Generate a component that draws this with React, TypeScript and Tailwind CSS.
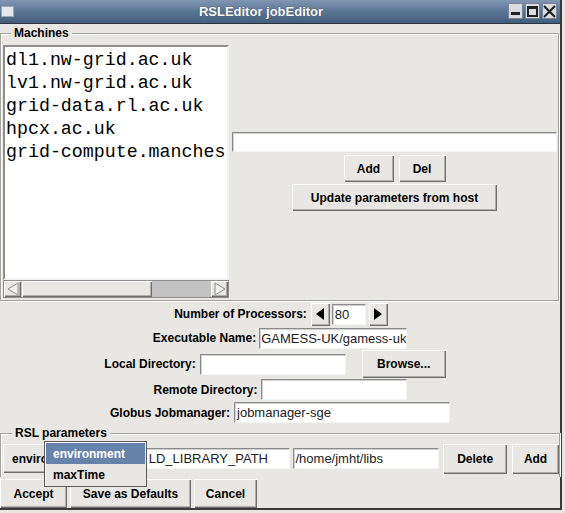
import React from "react";

const SANS = { fontFamily: '"Liberation Sans", Arial, sans-serif' };

const raised =
  "bg-[#e8e7e3] shadow-[inset_1px_1px_0_#ffffff,inset_-1px_-1px_0_#6e6e6e,inset_-2px_-2px_0_#b0afab]";
const sunken =
  "bg-white border border-t-[#8a8a8a] border-l-[#8a8a8a] border-b-[#f4f4f4] border-r-[#f4f4f4] shadow-[inset_1px_1px_0_#d0d0d0]";

function Btn({ children, className = "" }: { children: React.ReactNode; className?: string }) {
  return (
    <div
      className={`${raised} flex items-center justify-center text-[12px] font-bold text-black ${className}`}
      style={SANS}
    >
      {children}
    </div>
  );
}

function Field({ value = "", className = "" }: { value?: string; className?: string }) {
  return (
    <div
      className={`${sunken} flex items-center text-[13px] text-[#222] overflow-hidden whitespace-nowrap ${className}`}
      style={SANS}
    >
      {value}
    </div>
  );
}

function Label({ children }: { children: React.ReactNode }) {
  return (
    <span className="text-[12px] font-bold text-black whitespace-nowrap" style={SANS}>
      {children}
    </span>
  );
}

function Tri({ dir, color = "#000" }: { dir: "l" | "r"; color?: string }) {
  return (
    <svg width="10" height="12" viewBox="0 0 10 12">
      {dir === "l" ? (
        <polygon points="9,0 9,12 1,6" fill={color} />
      ) : (
        <polygon points="1,0 1,12 9,6" fill={color} />
      )}
    </svg>
  );
}

export default function App() {
  const machines = [
    "dl1.nw-grid.ac.uk",
    "lv1.nw-grid.ac.uk",
    "grid-data.rl.ac.uk",
    "hpcx.ac.uk",
    "grid-compute.manches",
  ];
  return (
    <div className="w-[565px] h-[513px] bg-[#e8e7e3] overflow-hidden" style={SANS}>
      <div className="w-[562px] h-[510px] flex flex-col border-r-2 border-b-2 border-[#3a3a3a]">
        {/* Title bar */}
        <div className="h-[24px] flex items-center bg-gradient-to-b from-[#8197b4] via-[#5d7595] to-[#455d7c] border-b border-[#2a3440] relative">
          <div className="ml-[1px] w-[13px] h-[11px] bg-[#e4e8ee] border border-[#9aa6b6]" />
          <div className="flex-1 text-center text-white font-bold text-[13px] [text-shadow:0_0_1px_#203040]">
            RSLEditor jobEditor
          </div>
          <div className="flex gap-[2px] mr-[3px]">
            <div className="w-[15px] h-[16px] bg-[#d9dce1] border border-[#7a8496] flex items-end justify-center pb-[3px]">
              <div className="w-[9px] h-[3px] bg-[#222]" />
            </div>
            <div className="w-[15px] h-[16px] bg-[#d9dce1] border border-[#7a8496] flex items-center justify-center">
              <div className="w-[11px] h-[11px] border-[2px] border-t-[3px] border-[#222]" />
            </div>
            <div className="w-[15px] h-[16px] bg-[#d9dce1] border border-[#7a8496] flex items-center justify-center">
              <svg width="13" height="13" viewBox="0 0 13 13">
                <path d="M1 1 L12 12 M12 1 L1 12" stroke="#222" strokeWidth="2.2" />
              </svg>
            </div>
          </div>
        </div>

        {/* Machines group */}
        <div className="relative mt-[9px] w-[559px] h-[271px] border border-[#a3a29e] shadow-[inset_1px_1px_0_#ffffff,1px_1px_0_#ffffff] flex pl-[2px] pt-[11px] pb-[2px]">
          <span className="absolute -top-[8px] left-[10px] px-[3px] bg-[#e8e7e3] text-[12px] font-bold leading-[14px]">
            Machines
          </span>
          <div className="w-[226px] flex flex-col">
            <div
              className="flex-1 bg-white border-2 border-t-[#8e8e8e] border-l-[#8e8e8e] border-r-[#f2f2f2] border-b-[#f2f2f2] pl-[1px] pt-[2px] text-[18.3px] leading-[23px] text-black overflow-hidden whitespace-nowrap"
              style={{ fontFamily: '"Liberation Mono", "Courier New", monospace' }}
            >
              {machines.map((m) => (
                <div key={m}>{m}</div>
              ))}
            </div>
            <div className="h-[18px] flex bg-[#c3c3c3] border border-[#8e8e8e]">
              <div className={`${raised} w-[17px] flex items-center justify-center`}>
                <svg width="12" height="14" viewBox="0 0 12 14">
                  <polygon points="11,1 11,13 1,7" fill="#f2f2f2" stroke="#8a8a8a" />
                </svg>
              </div>
              <div className={`${raised} w-[130px] ml-[1px]`} />
              <div className="flex-1" />
              <div className={`${raised} w-[17px] flex items-center justify-center`}>
                <svg width="12" height="14" viewBox="0 0 12 14">
                  <polygon points="1,1 1,13 11,7" fill="#f2f2f2" stroke="#8a8a8a" />
                </svg>
              </div>
            </div>
          </div>
          <div className="flex-1 ml-[3px] mr-[1px] flex flex-col items-center justify-center">
            <Field className="w-full h-[20px]" />
            <div className="flex gap-[5px] mt-[3px]">
              <Btn className="w-[50px] h-[27px]">Add</Btn>
              <Btn className="w-[47px] h-[27px]">Del</Btn>
            </div>
            <Btn className="w-[205px] h-[27px] mt-[2px]">Update parameters from host</Btn>
          </div>
        </div>

        {/* Form rows */}
        <div className="w-[560px] flex flex-col items-center mt-[1px]">
          <div className="h-[24px] flex items-center gap-[4px] pl-[2px]">
            <Label>Number of Processors:</Label>
            <div className="flex items-center">
              <Btn className="w-[19px] h-[23px]">
                <Tri dir="l" />
              </Btn>
              <Field value="80" className="w-[34px] h-[21px] ml-[2px] pl-[2px]" />
              <Btn className="w-[19px] h-[23px] ml-[3px]">
                <Tri dir="r" />
              </Btn>
            </div>
          </div>
          <div className="h-[22px] mt-[1px] flex items-center gap-[3px]">
            <Label>Executable Name:</Label>
            <Field value="GAMESS-UK/gamess-uk" className="w-[148px] h-[21px] pl-[1px] text-[12.8px]" />
          </div>
          <div className="h-[28px] mt-[1px] flex items-center gap-[4px] mr-[10px]">
            <Label>Local Directory:</Label>
            <Field className="w-[146px] h-[21px]" />
            <Btn className="w-[84px] h-[28px] ml-[12px]">Browse...</Btn>
          </div>
          <div className="h-[21px] mt-[1px] flex items-center gap-[3px]">
            <Label>Remote Directory:</Label>
            <Field className="w-[146px] h-[21px]" />
          </div>
          <div className="h-[21px] mt-[2px] flex items-center gap-[4px]">
            <Label>Globus Jobmanager:</Label>
            <Field value="jobmanager-sge" className="w-[216px] h-[21px] pl-[2px]" />
          </div>
        </div>

        {/* RSL parameters group */}
        <div className="relative mt-[10px] w-[560px] h-[44px] border border-b-0 border-[#a3a29e] shadow-[inset_1px_1px_0_#ffffff,1px_0_0_#ffffff] flex items-start pt-[10px] pl-[2px] gap-[3px]">
          <span className="absolute -top-[8px] left-[11px] px-[3px] bg-[#e8e7e3] text-[12px] font-bold leading-[14px]">
            RSL parameters
          </span>
          <Btn className="w-[138px] h-[29px] !justify-start pl-[9px]">environment</Btn>
          <Field value="LD_LIBRARY_PATH" className="w-[147px] h-[21px] mt-[4px] pl-[4px]" />
          <Field value="/home/jmht/libs" className="w-[146px] h-[21px] mt-[4px] pl-[1px]" />
          <Btn className="w-[64px] h-[30px] ml-[1px]">Delete</Btn>
          <Btn className="w-[47px] h-[30px] ml-[2px]">Add</Btn>

          {/* popup menu */}
          <div className="absolute left-[43px] top-[7px] w-[103px] bg-[#e8e7e3] border border-[#5a5a5a] shadow-[inset_1px_1px_0_#ffffff] p-[1px] z-10">
            <div className="h-[21px] bg-[#6684ab] text-white text-[12px] font-bold flex items-center pl-[7px]">
              environment
            </div>
            <div className="h-[21px] text-black text-[12px] font-bold flex items-center pl-[7px]">
              maxTime
            </div>
          </div>
        </div>

        {/* Bottom buttons */}
        <div className="flex gap-[3px] mt-[2px]">
          <Btn className="w-[67px] h-[29px]">Accept</Btn>
          <Btn className="w-[121px] h-[29px]">Save as Defaults</Btn>
          <Btn className="w-[63px] h-[29px]">Cancel</Btn>
        </div>
      </div>
    </div>
  );
}
